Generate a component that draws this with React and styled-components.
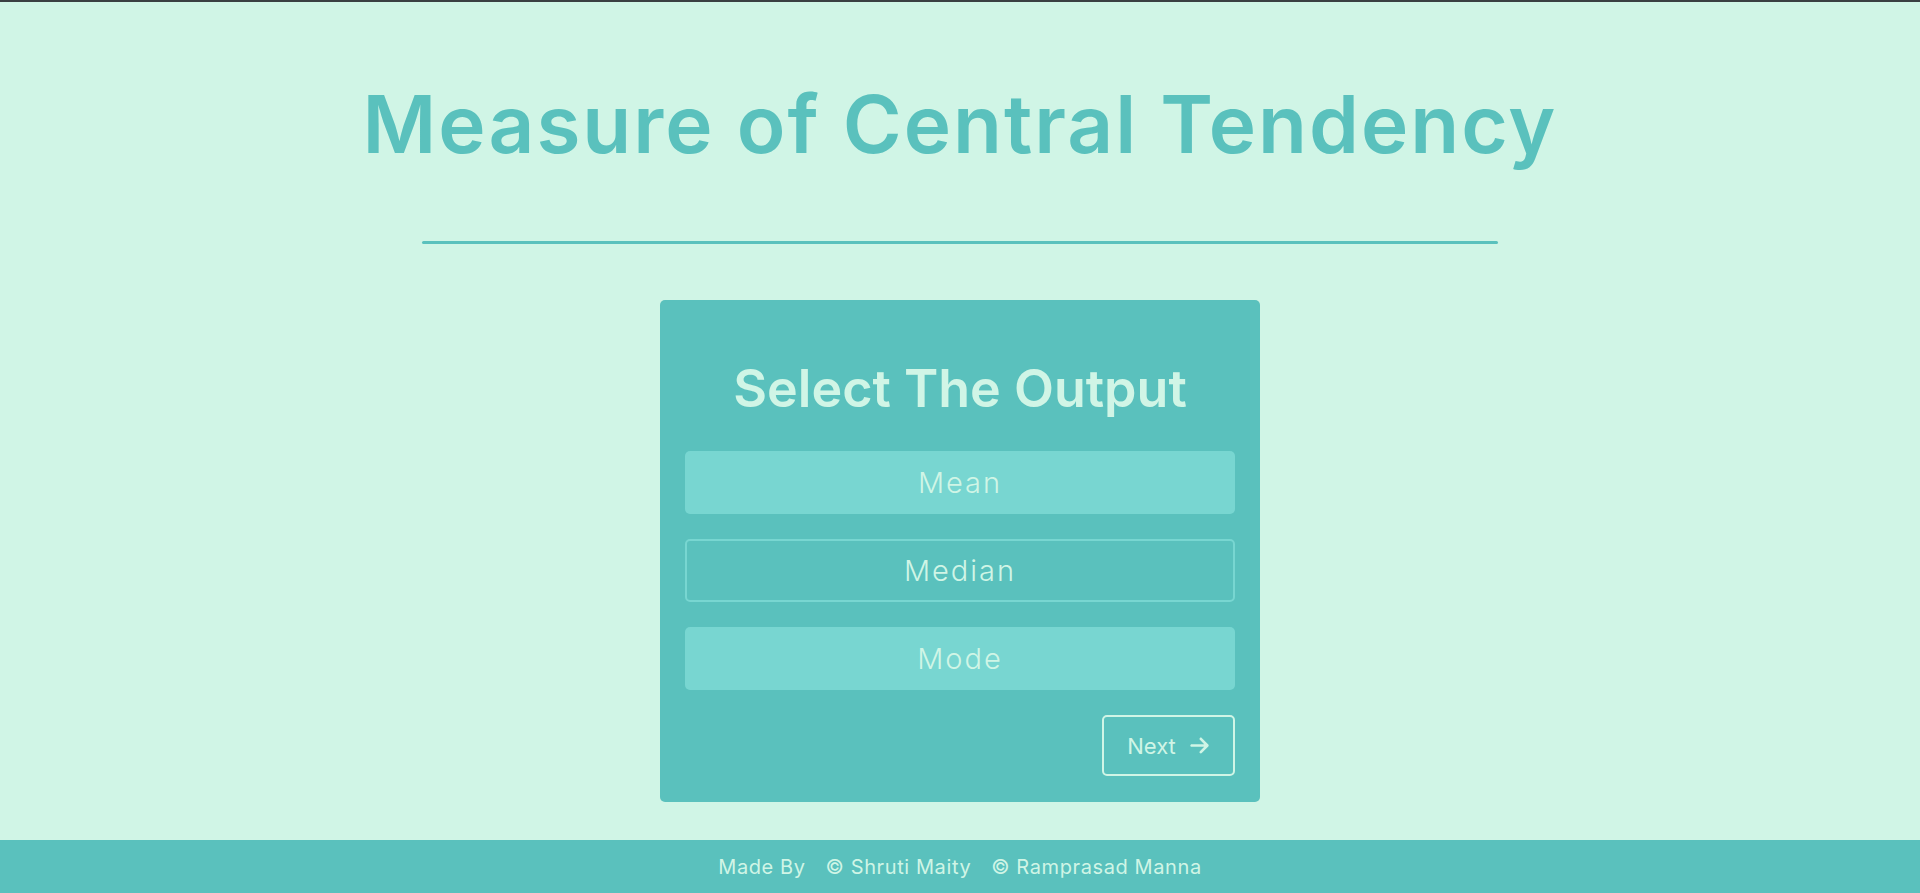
import React, { useState } from "react";
import styled, { createGlobalStyle } from "styled-components";
import { FaArrowRight } from "react-icons/fa6";

const GlobalStyle = createGlobalStyle`
    * {
        box-sizing: border-box;
    }

    body {
        margin: 0;
        background-color: #d0f5e6;
        font-family: Inter, "Noto Sans", sans-serif;
    }
`;

const Page = styled.div`
    display: flex;
    flex-direction: column;
    min-height: 893px;
    border-top: 2px solid #3a3f42;
`;

const Main = styled.main`
    flex: 1;
    display: flex;
    flex-direction: column;
    align-items: center;
`;

const Title = styled.h1`
    margin: 74px 0 0;
    font-size: 80px;
    line-height: 96px;
    font-weight: 600;
    color: #5ac1bd;
    letter-spacing: 2px;
`;

const Divider = styled.hr`
    width: 56%;
    height: 3px;
    margin: 69px 0 0;
    border: none;
    border-radius: 2px;
    background-color: #5ac1bd;
`;

const Card = styled.section`
    display: flex;
    flex-direction: column;
    width: 600px;
    margin: 56px 0 38px;
    padding: 58px 25px 26px;
    border-radius: 5px;
    background-color: #5ac1bd;
`;

const CardTitle = styled.h2`
    margin: 0 0 31px;
    text-align: center;
    font-size: 52px;
    line-height: 62px;
    font-weight: 600;
    color: #d0f5e6;
`;

const Options = styled.div`
    display: flex;
    flex-direction: column;
    gap: 25px;
`;

const Option = styled.button`
    height: 63px;
    width: 100%;
    border-radius: 5px;
    border: 2px solid ${(p) => (p.$active ? "#78d6d1" : "transparent")};
    background-color: ${(p) => (p.$active ? "transparent" : "#78d6d1")};
    color: #d0f5e6;
    font-family: inherit;
    font-size: 29px;
    font-weight: 300;
    letter-spacing: 2px;
    cursor: pointer;
`;

const Actions = styled.div`
    display: flex;
    justify-content: flex-end;
    margin-top: 25px;
`;

const NextButton = styled.button`
    display: flex;
    align-items: center;
    justify-content: center;
    gap: 13px;
    width: 133px;
    height: 61px;
    border: 2px solid #d0f5e6;
    border-radius: 5px;
    background: transparent;
    color: #d0f5e6;
    font-family: inherit;
    font-size: 22px;
    font-weight: 400;
    cursor: pointer;
`;

const Footer = styled.footer`
    display: flex;
    align-items: center;
    justify-content: center;
    gap: 20px;
    height: 54px;
    background-color: #5ac1bd;
    color: #d0f5e6;
    font-size: 20px;
    font-weight: 400;
    letter-spacing: 0.6px;
`;

const options = ["Mean", "Median", "Mode"];

const App = () => {
    const [selected, setSelected] = useState("Median");

    return (
        <Page>
            <GlobalStyle />
            <Main>
                <Title>Measure of Central Tendency</Title>
                <Divider />
                <Card>
                    <CardTitle>Select The Output</CardTitle>
                    <Options>
                        {options.map((o) => (
                            <Option key={o} $active={selected === o} onClick={() => setSelected(o)}>
                                {o}
                            </Option>
                        ))}
                    </Options>
                    <Actions>
                        <NextButton>
                            Next <FaArrowRight size={21} />
                        </NextButton>
                    </Actions>
                </Card>
            </Main>
            <Footer>
                <span>Made By</span>
                <span>© Shruti Maity</span>
                <span>© Ramprasad Manna</span>
            </Footer>
        </Page>
    );
};

export default App;
